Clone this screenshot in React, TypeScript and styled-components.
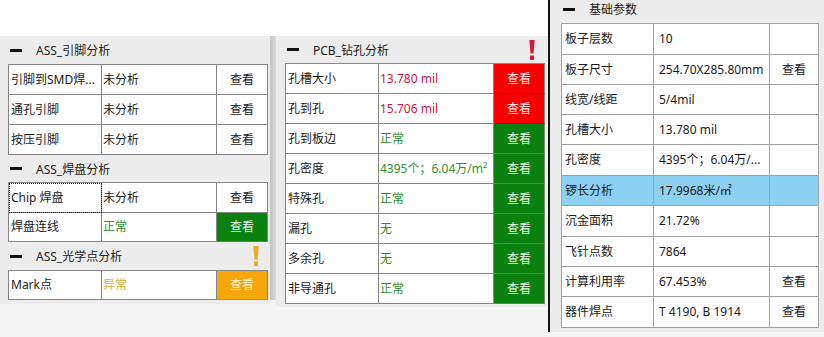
import React from 'react';
import styled, { createGlobalStyle } from 'styled-components';

const GlobalStyle = createGlobalStyle`
  html, body { margin: 0; padding: 0; }
  body {
    font-family: "Noto Sans", "Noto Sans CJK SC", sans-serif;
    font-size: 12px;
    color: #1a1a1a;
    background: #f4f4f4;
  }
`;

const Page = styled.div`
  display: flex;
  align-items: flex-start;
  width: 824px;
  height: 337px;
  overflow: hidden;
  background: #f4f4f4;
`;

const LeftArea = styled.div`
  width: 548px;
  display: flex;
  flex-direction: column;
`;

const TopBand = styled.div`
  height: 36px;
  background: #ffffff;
`;

const PanelsRow = styled.div`
  display: flex;
  align-items: flex-start;
`;

const Panel = styled.section<{ $w: number; $h: number; $pl: number; $pr: number }>`
  box-sizing: border-box;
  width: ${p => p.$w}px;
  height: ${p => p.$h}px;
  padding: 0 ${p => p.$pr}px 0 ${p => p.$pl}px;
  background: #ececec;
  display: flex;
  flex-direction: column;
  flex-shrink: 0;
`;

const Splitter = styled.div`
  width: 6px;
  height: 264px;
  flex-shrink: 0;
  background: linear-gradient(to right, #c2c2c2, #cfcfcf 60%, #dcdcdc);
`;

const VLine = styled.div`
  width: 2px;
  height: 332px;
  flex-shrink: 0;
  background: #141414;
`;

const Header = styled.div<{ $h: number; $pb?: number }>`
  box-sizing: border-box;
  height: ${p => p.$h}px;
  padding-bottom: ${p => p.$pb ?? 0}px;
  display: flex;
  align-items: center;
  padding-left: 2px;
  color: #222;
  white-space: nowrap;
`;

const Minus = styled.span`
  width: 12px;
  height: 3px;
  background: #111;
  margin-right: 14px;
  flex-shrink: 0;
`;

const Alert = styled.svg`
  margin-left: auto;
  margin-right: 8px;
  flex-shrink: 0;
`;

const Table = styled.div<{ $cols: string; $rows: string; $line: string }>`
  display: grid;
  grid-template-columns: ${p => p.$cols};
  grid-template-rows: ${p => p.$rows};
  border-top: 1px solid ${p => p.$line};
  border-left: 1px solid ${p => p.$line};
  width: max-content;
  --line: ${p => p.$line};
`;

type Tone = 'white' | 'red' | 'green' | 'orange' | 'blue';

const toneBg: Record<Tone, string> = {
  white: '#ffffff',
  red: '#f80000',
  green: '#0a800f',
  orange: '#f8a70a',
  blue: '#8cd0f2',
};

const toneBorder: Record<Tone, string> = {
  white: 'var(--line)',
  red: '#c80000',
  green: '#3d9a3d',
  orange: '#d88c00',
  blue: 'var(--line)',
};

const Cell = styled.div<{ $tone?: Tone; $color?: string; $pl?: number; $center?: boolean; $focus?: boolean }>`
  box-sizing: border-box;
  display: flex;
  align-items: center;
  justify-content: ${p => (p.$center ? 'center' : 'flex-start')};
  padding-left: ${p => (p.$center ? 0 : p.$pl ?? 2)}px;
  background: ${p => toneBg[p.$tone ?? 'white']};
  color: ${p => p.$color ?? '#1a1a1a'};
  border-right: 1px solid var(--line);
  border-bottom: 1px solid ${p => toneBorder[p.$tone ?? 'white']};
  white-space: nowrap;
  overflow: hidden;
  line-height: 16px;
  outline: ${p => (p.$focus ? '1px dotted #222' : 'none')};
  outline-offset: -1px;
`;

const C = {
  red: '#c8173c',
  green: '#2f8f2f',
  gold: '#d8ae3a',
  redBtn: '#ffe8e8',
  greenBtn: '#e6f3e6',
  orangeBtn: '#fff0cc',
};

const Bang = ({ color }: { color: string }) => (
  <Alert width="6" height="20" viewBox="0 0 6 20">
    <path d="M0.3 0 H5.7 L4.5 13.5 H1.5 Z" fill={color} />
    <rect x="1" y="15.5" width="4" height="4.5" fill={color} />
  </Alert>
);

type Row = { name: string; value: string; color?: string; tone?: Tone; btnColor?: string; focus?: boolean };

const LeftTable = ({ rows, heights }: { rows: Row[]; heights: string }) => (
  <Table $cols="93px 115px 51px" $rows={heights} $line="#858585">
    {rows.map(r => (
      <React.Fragment key={r.name}>
        <Cell $pl={2} $focus={r.focus}>{r.name}</Cell>
        <Cell $pl={1} $color={r.color}>{r.value}</Cell>
        <Cell $center $tone={r.tone} $color={r.btnColor}>查看</Cell>
      </React.Fragment>
    ))}
  </Table>
);

const pinRows: Row[] = [
  { name: '引脚到SMD焊...', value: '未分析' },
  { name: '通孔引脚', value: '未分析' },
  { name: '按压引脚', value: '未分析' },
];

const padRows: Row[] = [
  { name: 'Chip 焊盘', value: '未分析', focus: true },
  { name: '焊盘连线', value: '正常', color: C.green, tone: 'green', btnColor: C.greenBtn },
];

const markRows: Row[] = [
  { name: 'Mark点', value: '异常', color: C.gold, tone: 'orange', btnColor: C.orangeBtn },
];

const drillRows: Row[] = [
  { name: '孔槽大小', value: '13.780 mil', color: C.red, tone: 'red', btnColor: C.redBtn },
  { name: '孔到孔', value: '15.706 mil', color: C.red, tone: 'red', btnColor: C.redBtn },
  { name: '孔到板边', value: '正常', color: C.green, tone: 'green', btnColor: C.greenBtn },
  { name: '孔密度', value: '4395个；6.04万/m²', color: C.green, tone: 'green', btnColor: C.greenBtn },
  { name: '特殊孔', value: '正常', color: C.green, tone: 'green', btnColor: C.greenBtn },
  { name: '漏孔', value: '无', color: C.green, tone: 'green', btnColor: C.greenBtn },
  { name: '多余孔', value: '无', color: C.green, tone: 'green', btnColor: C.greenBtn },
  { name: '非导通孔', value: '正常', color: C.green, tone: 'green', btnColor: C.greenBtn },
];

type Param = { name: string; value: string; view?: boolean; blue?: boolean };

const params: Param[] = [
  { name: '板子层数', value: '10' },
  { name: '板子尺寸', value: '254.70X285.80mm', view: true },
  { name: '线宽/线距', value: '5/4mil' },
  { name: '孔槽大小', value: '13.780 mil' },
  { name: '孔密度', value: '4395个；6.04万/...' },
  { name: '锣长分析', value: '17.9968米/㎡', blue: true },
  { name: '沉金面积', value: '21.72%' },
  { name: '飞针点数', value: '7864' },
  { name: '计算利用率', value: '67.453%', view: true },
  { name: '器件焊点', value: 'T 4190, B 1914', view: true },
];

export default function App() {
  return (
    <>
      <GlobalStyle />
      <Page>
        <LeftArea>
          <TopBand />
          <PanelsRow>
            <Panel $w={270} $h={268} $pl={8} $pr={3}>
              <Header $h={28}>
                <Minus />
                ASS_引脚分析
              </Header>
              <LeftTable rows={pinRows} heights="30px 30px 30px" />
              <Header $h={27}>
                <Minus />
                ASS_焊盘分析
              </Header>
              <LeftTable rows={padRows} heights="30px 29px" />
              <Header $h={28}>
                <Minus />
                ASS_光学点分析
                <Bang color="#f5a623" />
              </Header>
              <LeftTable rows={markRows} heights="29px" />
            </Panel>
            <Splitter />
            <Panel $w={271} $h={271} $pl={9} $pr={4}>
              <Header $h={27}>
                <Minus />
                PCB_钻孔分析
                <Bang color="#d6163e" />
              </Header>
              <LeftTable rows={drillRows} heights="repeat(8, 30px)" />
            </Panel>
          </PanelsRow>
        </LeftArea>
        <VLine />
        <Panel $w={274} $h={332} $pl={11} $pr={6}>
          <Header $h={23} $pb={5}>
            <Minus />
            基础参数
          </Header>
          <Table
            $cols="92px 116px 49px"
            $rows="31px 30px 30px 30px 31px 30px 31px 30px 30px 31px"
            $line="#a2a2a2"
          >
            {params.map(p => (
              <React.Fragment key={p.name}>
                <Cell $pl={3} $tone={p.blue ? 'blue' : 'white'}>{p.name}</Cell>
                <Cell $pl={5} $tone={p.blue ? 'blue' : 'white'}>{p.value}</Cell>
                <Cell $center $tone={p.blue ? 'blue' : 'white'}>{p.view ? '查看' : ''}</Cell>
              </React.Fragment>
            ))}
          </Table>
        </Panel>
      </Page>
    </>
  );
}
